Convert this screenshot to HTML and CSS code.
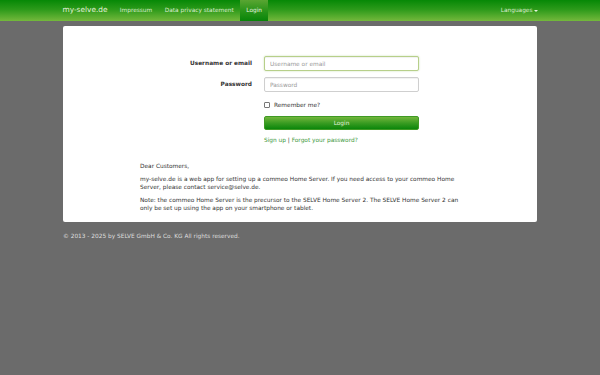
FILE: index.html
```html
<!DOCTYPE html>
<html>
<head>
<meta charset="utf-8">
<link rel="stylesheet" href="styles.css">
</head>
<body>
<nav class="navbar">
  <div class="nav-inner">
    <a class="brand">my-selve.de</a>
    <ul class="nav">
      <li><a>Impressum</a></li>
      <li><a>Data privacy statement</a></li>
      <li class="active"><a>Login</a></li>
    </ul>
    <ul class="nav nav-right">
      <li><a>Languages<span class="caret"></span></a></li>
    </ul>
  </div>
</nav>
<main class="container">
  <section class="panel">
    <form class="login-form">
      <div class="row">
        <label class="label">Username or email</label>
        <input class="input focus" type="text" placeholder="Username or email">
      </div>
      <div class="row">
        <label class="label">Password</label>
        <input class="input" type="password" placeholder="Password">
      </div>
      <div class="row check-row">
        <span class="label"></span>
        <label class="check"><span class="box"></span>Remember me?</label>
      </div>
      <div class="row btn-row">
        <span class="label"></span>
        <button class="btn" type="button">Login</button>
      </div>
      <div class="row links-row">
        <span class="label"></span>
        <div class="links"><a>Sign up</a> | <a>Forgot your password?</a></div>
      </div>
    </form>
    <div class="info">
      <p>Dear Customers,</p>
      <p>my-selve.de is a web app for setting up a commeo Home Server. If you need access to your commeo Home Server, please contact service@selve.de.</p>
      <p>Note: the commeo Home Server is the precursor to the SELVE Home Server 2. The SELVE Home Server 2 can only be set up using the app on your smartphone or tablet.</p>
    </div>
  </section>
  <footer class="footer">© 2013 - 2025 by SELVE GmbH &amp; Co. KG All rights reserved.</footer>
</main>
</body>
</html>
```
FILE: styles.css
```css
html, body {
  margin: 0;
  padding: 0;
}
body {
  background: #6b6b6b;
  font-family: "DejaVu Sans", Verdana, sans-serif;
  font-size: 5.83px;
  line-height: 8.33px;
  color: #333;
  height: 375px;
}
.navbar {
  height: 21px;
  background: linear-gradient(to bottom, #068806 0%, #2c9a1a 45%, #74b83c 100%);
}
.nav-inner {
  width: 475px;
  margin: 0 auto;
  display: flex;
  align-items: stretch;
  height: 21px;
}
.brand {
  font-size: 7.4px;
  color: #e6f2dc;
  display: flex;
  align-items: center;
  padding-right: 6px;
}
.nav {
  list-style: none;
  margin: 0;
  padding: 0;
  display: flex;
}
.nav li {
  display: flex;
}
.nav a {
  display: flex;
  align-items: center;
  padding: 0 6.25px;
  color: #dcecd0;
}
.nav li.active a {
  background: linear-gradient(to bottom, #5aa532 0%, #2a951a 50%, #088508 100%);
  color: #e8f3e0;
}
.nav-right {
  margin-left: auto;
}
.nav-right a {
  padding-right: 0;
}
.caret {
  display: inline-block;
  width: 0;
  height: 0;
  border-left: 2px solid transparent;
  border-right: 2px solid transparent;
  border-top: 2px solid #e6f2dc;
  margin-left: 1px;
}
.container {
  width: 474px;
  margin: 0 auto;
  padding-top: 5px;
}
.panel {
  background: #fff;
  border-radius: 2px;
  height: 196px;
  box-sizing: border-box;
  padding-top: 30px;
}
.login-form {
  display: flex;
  flex-direction: column;
}
.row {
  display: grid;
  grid-template-columns: 189px 155px;
  column-gap: 12px;
  align-items: center;
  height: 15px;
  margin-bottom: 6px;
}
.label {
  font-weight: bold;
  text-align: right;
  color: #333;
}
.input {
  box-sizing: border-box;
  width: 155px;
  height: 15px;
  border: 1px solid #cfcfcf;
  border-radius: 2px;
  padding: 0 5px;
  font-family: "DejaVu Sans", Verdana, sans-serif;
  font-size: 5.83px;
  color: #555;
  outline: none;
  box-shadow: inset 0 1px 1px rgba(0,0,0,0.06);
}
.input::placeholder {
  color: #9a9a9a;
}
.input.focus {
  border-color: #b7cf8a;
  box-shadow: inset 0 1px 1px rgba(0,0,0,0.06), 0 0 2px rgba(120,180,60,0.4);
}
.check-row {
  height: 10px;
  margin-top: 2px;
  margin-bottom: 6px;
}
.check {
  display: flex;
  align-items: center;
  color: #333;
}
.box {
  width: 4px;
  height: 4px;
  border: 1px solid #777;
  border-radius: 1px;
  margin-right: 4px;
  background: #fff;
}
.btn-row {
  height: 14px;
  margin-bottom: 6px;
}
.btn {
  width: 155px;
  height: 14px;
  border: 1px solid #3f9a24;
  border-radius: 2px;
  background: linear-gradient(to bottom, #73b63c 0%, #3a9c22 50%, #0b860b 100%);
  color: #e4f1dc;
  font-family: "DejaVu Sans", Verdana, sans-serif;
  font-size: 5.83px;
  padding: 0;
}
.links-row {
  height: 8px;
}
.links {
  color: #333;
}
.links a {
  color: #3b983b;
}
.info {
  margin: 12px 0 0 77px;
  width: 330px;
}
.info p {
  margin: 0 0 4.5px;
}
.footer {
  color: #dedede;
  padding-top: 10px;
}
```
